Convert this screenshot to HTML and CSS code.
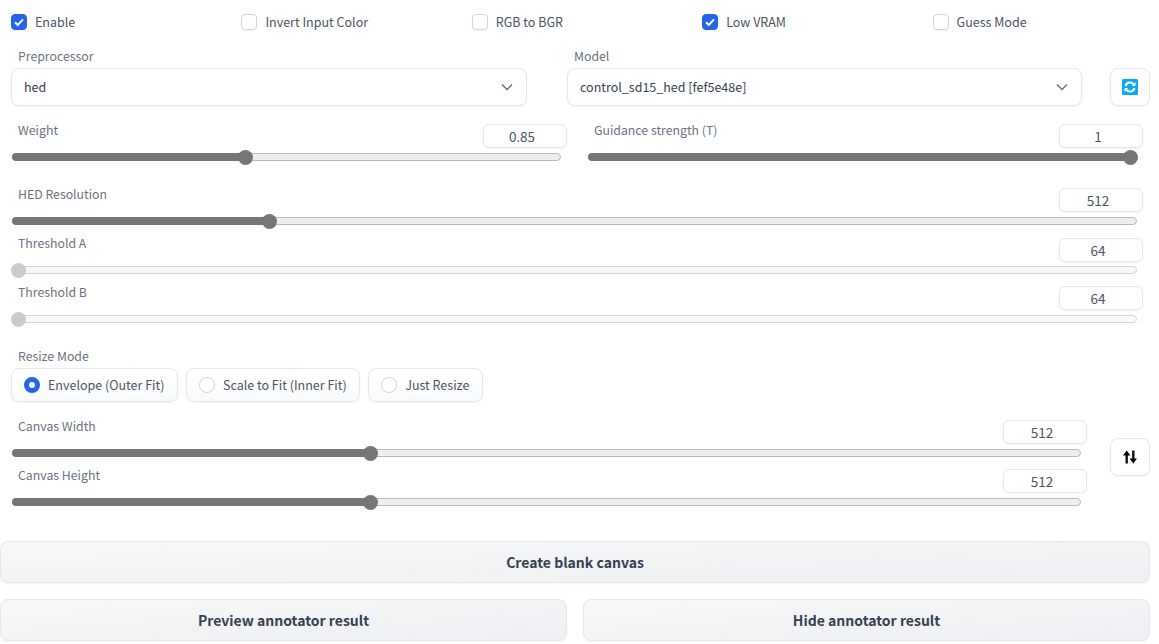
FILE: index.html
```html
<!DOCTYPE html>
<html>
<head>
  <link rel="stylesheet" href="styles.css">
  <title>ControlNet</title>
</head>
<body>
  <div class="page">
    <div class="checks">
      <label class="check"><span class="box on"><svg viewBox="0 0 16 16"><path d="M4 8.3l2.8 2.7L12 5.4"/></svg></span>Enable</label>
      <label class="check"><span class="box"></span>Invert Input Color</label>
      <label class="check"><span class="box"></span>RGB to BGR</label>
      <label class="check"><span class="box on"><svg viewBox="0 0 16 16"><path d="M4 8.3l2.8 2.7L12 5.4"/></svg></span>Low VRAM</label>
      <label class="check"><span class="box"></span>Guess Mode</label>
    </div>

    <div class="selects">
      <div class="field">
        <div class="label">Preprocessor</div>
        <div class="select">hed<svg class="chev" viewBox="0 0 12 8"><path d="M1 1.5l5 5 5-5"/></svg></div>
      </div>
      <div class="field">
        <div class="label">Model</div>
        <div class="select">control_sd15_hed [fef5e48e]<svg class="chev" viewBox="0 0 12 8"><path d="M1 1.5l5 5 5-5"/></svg></div>
      </div>
      <button class="tool">
        <svg width="16" height="16" viewBox="0 0 16 16">
          <rect width="16" height="16" rx="1.5" fill="#08a9f1"/>
          <path class="arrow" d="M3.6 7A4.4 4.4 0 0 1 11.3 5"/>
          <path class="head" d="M9.5 7h4V3z"/>
          <path class="arrow" d="M12.4 9A4.4 4.4 0 0 1 4.7 11"/>
          <path class="head" d="M6.5 9h-4v4z"/>
        </svg>
      </button>
    </div>

    <div class="pair">
      <div class="slider">
        <div class="slider-head"><span class="label">Weight</span><span class="num">0.85</span></div>
        <div class="track"><div class="fill" style="width: 234px"></div></div>
      </div>
      <div class="slider">
        <div class="slider-head"><span class="label">Guidance strength (T)</span><span class="num">1</span></div>
        <div class="track"><div class="fill" style="width: 543px"></div></div>
      </div>
    </div>

    <div class="stack">
      <div class="slider">
        <div class="slider-head"><span class="label">HED Resolution</span><span class="num">512</span></div>
        <div class="track"><div class="fill" style="width: 258px"></div></div>
      </div>
      <div class="slider off">
        <div class="slider-head"><span class="label">Threshold A</span><span class="num">64</span></div>
        <div class="track"><div class="fill" style="width: 7px"></div></div>
      </div>
      <div class="slider off">
        <div class="slider-head"><span class="label">Threshold B</span><span class="num">64</span></div>
        <div class="track"><div class="fill" style="width: 7px"></div></div>
      </div>
    </div>

    <div class="resize">
      <div class="label">Resize Mode</div>
      <div class="radios">
        <label class="radio"><span class="dot on"></span>Envelope (Outer Fit)</label>
        <label class="radio"><span class="dot"></span>Scale to Fit (Inner Fit)</label>
        <label class="radio"><span class="dot"></span>Just Resize</label>
      </div>
    </div>

    <div class="canvas-row">
      <div class="canvas-sliders">
        <div class="slider">
          <div class="slider-head"><span class="label">Canvas Width</span><span class="num">512</span></div>
          <div class="track"><div class="fill" style="width: 359px"></div></div>
        </div>
        <div class="slider">
          <div class="slider-head"><span class="label">Canvas Height</span><span class="num">512</span></div>
          <div class="track"><div class="fill" style="width: 359px"></div></div>
        </div>
      </div>
      <button class="tool">
        <svg width="14" height="14" viewBox="0 0 14 14">
          <path class="swap" d="M3.7 13.5V3"/>
          <path d="M3.7 .5L7.4 5.5H0z"/>
          <path class="swap" d="M10.3 .5V11"/>
          <path d="M10.3 13.5L6.6 8.5H14z"/>
        </svg>
      </button>
    </div>

    <button class="btn wide">Create blank canvas</button>
    <div class="btn-row">
      <button class="btn">Preview annotator result</button>
      <button class="btn">Hide annotator result</button>
    </div>
  </div>
</body>
</html>
```

FILE: styles.css
```css
* {
  box-sizing: border-box;
}
body {
  margin: 0;
  background-color: #fff;
  font-family: "Noto Sans CJK SC", "Noto Sans", sans-serif;
  font-size: 12.5px;
  color: #374151;
}
.page {
  width: 1150px;
  height: 644px;
  overflow: hidden;
}
.label {
  color: #6b7280;
  font-size: 12.3px;
  line-height: 20px;
  padding-left: 7px;
}

.checks {
  display: grid;
  grid-template-columns: repeat(5, 230.4px);
  padding: 14px 0 0 11px;
  height: 47px;
}
.check {
  display: flex;
  align-items: center;
  gap: 8px;
  height: 16px;
  line-height: 16px;
  color: #4b5563;
}
.box {
  width: 16px;
  height: 16px;
  border: 1px solid #d1d5db;
  border-radius: 4px;
  background: #fff;
  box-shadow: 0 1px 2px rgba(0, 0, 0, 0.05);
}
.box.on {
  background: #2563eb;
  border-color: #2563eb;
}
.box svg {
  display: block;
  width: 16px;
  height: 16px;
  margin: -1px;
  fill: none;
  stroke: #fff;
  stroke-width: 2;
}

.selects {
  display: grid;
  grid-template-columns: 516px 515px 40px;
  column-gap: 40px;
  padding-left: 11px;
}
.selects .label {
  margin-top: -1px;
}
.select {
  display: flex;
  align-items: center;
  justify-content: space-between;
  height: 38px;
  margin-top: 2px;
  padding: 0 13px 2px 12px;
  border: 1px solid #e5e7eb;
  border-radius: 8px;
  background: #fff;
  box-shadow: 0 1px 2px rgba(0, 0, 0, 0.05);
  color: #374151;
}
.chev {
  width: 12px;
  height: 8px;
  fill: none;
  stroke: #6b7280;
  stroke-width: 1.5;
  margin-top: 2px;
}
.tool {
  display: flex;
  align-items: center;
  justify-content: center;
  width: 40px;
  height: 38px;
  padding: 0;
  border: 1px solid #e5e7eb;
  border-radius: 8px;
  background: #fff;
  box-shadow: 0 1px 2px rgba(0, 0, 0, 0.05);
}
.selects .tool {
  margin: 21px 0 0 -12px;
}
.arrow {
  fill: none;
  stroke: #fff;
  stroke-width: 2;
}
.head {
  fill: #fff;
}
.swap {
  fill: none;
  stroke: #111;
  stroke-width: 2.4;
}

.pair {
  display: grid;
  grid-template-columns: 556px 556px;
  column-gap: 20px;
  margin-top: 18px;
  padding-left: 11px;
}
.slider-head {
  display: flex;
  align-items: flex-start;
  justify-content: space-between;
  height: 24px;
}
.slider-head .label {
  margin-top: -4px;
}
.num {
  width: 84px;
  height: 24px;
  padding-right: 6px;
  line-height: 22px;
  border: 1px solid #e5e7eb;
  border-radius: 6px;
  background: #fff;
  box-shadow: 0 1px 2px rgba(0, 0, 0, 0.05);
  text-align: center;
  font-size: 13.5px;
  color: #4b5563;
}
.track {
  position: relative;
  height: 8px;
  margin: 5px 6px 0 1px;
  border: 1px solid #bbb;
  border-radius: 4px;
  background: #efefef;
}
.fill {
  position: absolute;
  left: -1px;
  top: -1px;
  height: 8px;
  border-radius: 4px 0 0 4px;
  background: #767676;
}
.fill::after {
  content: "";
  position: absolute;
  right: -7px;
  top: -3.5px;
  width: 15px;
  height: 15px;
  border-radius: 50%;
  background: #767676;
}
.off .track {
  background: #f8f8f8;
  border-color: #d4d4d4;
}
.off .fill,
.off .fill::after {
  background: #cbcbcb;
}

.stack {
  padding: 0 7px 0 11px;
  margin-top: 27px;
}
.stack .slider {
  height: 49px;
}
.stack .slider:first-child {
  height: 50px;
}
.stack .slider:nth-child(2) {
  height: 48px;
}
.stack .slider:nth-child(2) .track {
  margin-top: 4px;
}
.stack .slider:nth-child(2) .label {
  margin-top: -5px;
}

.resize {
  margin-top: 11px;
  padding-left: 11px;
}
.radios {
  display: flex;
  gap: 8px;
  margin-top: 2px;
}
.radio {
  display: flex;
  align-items: center;
  gap: 8px;
  height: 34px;
  padding: 0 12.5px 0 12px;
  border: 1px solid #e5e7eb;
  border-radius: 8px;
  background: linear-gradient(to bottom, #fff, #f9fafb);
  box-shadow: 0 1px 2px rgba(0, 0, 0, 0.05);
  color: #4b5563;
  line-height: 30px;
}
.dot {
  width: 16px;
  height: 16px;
  border: 1px solid #d1d5db;
  border-radius: 50%;
  background: #fff;
}
.dot.on {
  border: 5px solid #2563eb;
}

.canvas-row {
  display: grid;
  grid-template-columns: 1076px 40px;
  column-gap: 23px;
  align-items: start;
  margin-top: 18px;
  padding-left: 11px;
}
.canvas-sliders .slider {
  height: 49px;
}
.canvas-row .tool {
  margin-top: 18px;
}

.btn {
  display: block;
  width: 100%;
  height: 42px;
  padding: 0;
  border: 1px solid #e5e7eb;
  border-radius: 8px;
  background: linear-gradient(to bottom right, #f7f8f9, #eeeff2);
  box-shadow: 0 1px 2px rgba(0, 0, 0, 0.05);
  font-family: inherit;
  font-size: 14px;
  font-weight: 600;
  color: #374151;
}
.wide {
  margin-top: 23px;
}
.btn-row {
  display: grid;
  grid-template-columns: 1fr 1fr;
  gap: 16px;
  margin-top: 16px;
}
```
